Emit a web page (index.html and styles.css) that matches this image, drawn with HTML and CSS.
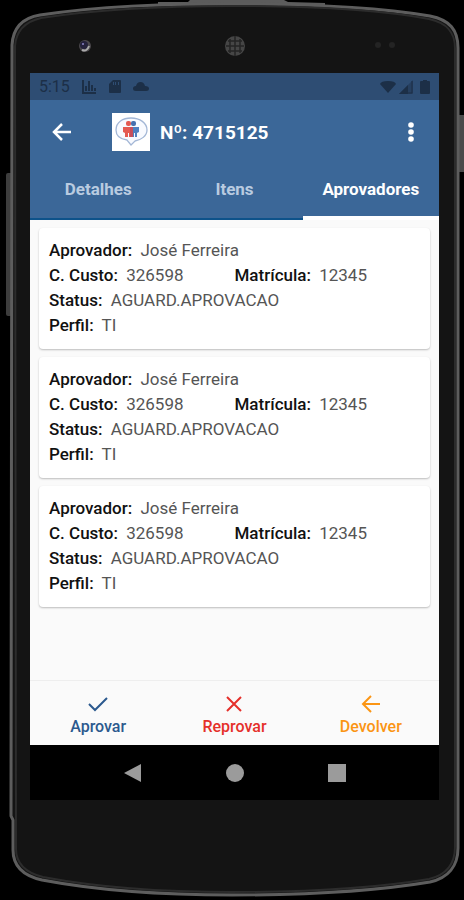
FILE: index.html
```html
<!DOCTYPE html>
<html lang="pt-BR">
<head>
  <meta charset="UTF-8">
  <meta name="viewport" content="width=device-width, initial-scale=1">
  <title>Aprovadores</title>
  <link rel="stylesheet" href="styles.css">
</head>
<body>

  <div class="phone">
    <!-- phone body -->
    <svg class="phone-frame" viewBox="0 0 464 900" preserveAspectRatio="none" aria-hidden="true">
      <rect x="6" y="173" width="8" height="143" rx="2" fill="#3d3d3d"/>
      <rect x="457" y="115" width="10" height="57" rx="2" fill="#4a4a4a"/>
      <path d="M158 2H188L190 0H284L288 2L325 3V6H158Z" fill="#5c5c5c"/>
      <path d="M12 45C13 28 22 18 40 15C100 6 160 4 232 4C310 4 380 8 430 16C450 20 458 30 458 48V848C458 866 448 878 430 882C370 892 300 895 232 895C160 895 95 890 42 880C24 876 13 866 13 850V820L11 816Z" fill="#141414" stroke="#5d5d5d" stroke-width="3"/>
      <path d="M15 46C16 31 24 22 41 18C100 9 160 6 232 6C310 6 380 10 429 19C447 23 455 32 455 48V847C455 864 446 875 429 879C370 889 300 892 232 892C160 892 96 887 43 877C27 873 16 864 16 849Z" fill="none" stroke="#2c2c2c" stroke-width="2"/>
    </svg>

    <div class="phone-top" aria-hidden="true">
      <svg viewBox="0 0 24 24"><circle cx="12" cy="12" r="6" fill="#4b484c"/><circle cx="11" cy="11" r="4" fill="#25223c"/><circle cx="10" cy="10" r="1" fill="#8d86c8"/><path d="M9 16Q14 18 16 12" stroke="#aaa" stroke-width="2" fill="none"/></svg>
      <svg viewBox="0 0 24 24"><circle cx="12" cy="12" r="10" fill="#464646"/><path d="M5 7H19M3 12H21M5 17H19M7 5V19M12 2V22M17 5V19" stroke="#252525" stroke-width="1.5"/></svg>
      <svg viewBox="0 0 24 24"><circle cx="5" cy="11" r="3" fill="#242424"/><circle cx="19" cy="11" r="3" fill="#242424"/></svg>
    </div>

    <main class="screen">
      <div class="status-bar">
        <span class="clock">5:15</span>
        <svg width="16" height="16" viewBox="0 0 16 16"><path d="M1 1H3V13H15V15H1Z"/><path d="M4 7H6V12H4ZM7 2H9V12H7ZM10 6H12V12H10ZM13 9H15V12H13Z"/></svg>
        <svg class="sd" width="12" height="16" viewBox="0 0 12 16"><path fill-rule="evenodd" d="M4 1H11Q12 1 12 2V13Q12 14 11 14H1Q0 14 0 13V5ZM4 3V6H5V3ZM6 3V6H7V3ZM9 3V6H10V3Z"/></svg>
        <svg width="16" height="16" viewBox="0 0 16 16"><path d="M3 12Q0 12 0 9.500T3 7Q4 3 7.500 3T12 7Q16 7 16 9.500T13 12Z"/></svg>
        <span class="spacer"></span>
        <svg class="wifi" width="16" height="16" viewBox="0 0 16 16"><path d="M0 5Q1 2 8 2T16 5L8 14Z"/></svg>
        <svg width="14" height="16" viewBox="0 0 14 16"><path d="M14 1V15H0Z" opacity=".45"/><path d="M9 6V15H0Z"/><path d="M13 2V14H9" fill="none" stroke="#1c2f47"/></svg>
        <svg class="battery" width="10" height="16" viewBox="0 0 10 16"><path d="M3 1H7V2H9Q10 2 10 3V14Q10 15 9 15H1Q0 15 0 14V3Q0 2 1 2H3Z"/></svg>
      </div>

      <header class="app-bar">
        <button class="icon-btn" aria-label="Voltar">
          <svg width="24" height="24" viewBox="0 0 24 24"><path d="M21 12H4M12 4L4 12L12 20" fill="none" stroke="#fff" stroke-width="2.500"/></svg>
        </button>
        <svg class="logo" viewBox="0 0 38 38" role="img" aria-label="Logo">
          <rect width="38" height="38" fill="#fff"/>
          <path d="M15 27C7 26 4 22 4 17C4 9 11 5 19 5C28 5 35 10 35 17C35 23 29 27 23 28L19 32Z" fill="#f8faff" stroke="#a3b7d6" stroke-width="1.300"/>
          <rect x="14" y="8" width="5" height="5" rx="2" fill="#e45a52"/>
          <rect x="19" y="8" width="5" height="5" rx="2" fill="#456fae"/>
          <path d="M11 14H20V24H17V20H16V24H13V20L11 19Z" fill="#e45a52"/>
          <path d="M20 14H27V19L25 20V24H23V20H22V24H20Z" fill="#4f80c0"/>
          <path d="M18 14H21V24H18Z" fill="#c64f5d"/>
        </svg>
        <h1>Nº: 4715125</h1>
        <button class="icon-btn" aria-label="Mais opções">
          <svg width="24" height="24" viewBox="0 0 24 24" fill="#fff"><circle cx="12" cy="5" r="2.800"/><circle cx="12" cy="12" r="2.800"/><circle cx="12" cy="19" r="2.800"/></svg>
        </button>
      </header>

      <nav class="tabs">
        <a href="#detalhes">Detalhes</a>
        <a href="#itens">Itens</a>
        <a href="#aprovadores" class="active" aria-current="page">Aprovadores</a>
      </nav>

      <section class="list" id="aprovadores">
        <article class="card">
          <p><b>Aprovador:</b> José Ferreira</p>
          <div class="cols">
            <p><b>C. Custo:</b> 326598</p>
            <p><b>Matrícula:</b> 12345</p>
          </div>
          <p><b>Status:</b> AGUARD.APROVACAO</p>
          <p><b>Perfil:</b> TI</p>
        </article>
        <article class="card">
          <p><b>Aprovador:</b> José Ferreira</p>
          <div class="cols">
            <p><b>C. Custo:</b> 326598</p>
            <p><b>Matrícula:</b> 12345</p>
          </div>
          <p><b>Status:</b> AGUARD.APROVACAO</p>
          <p><b>Perfil:</b> TI</p>
        </article>
        <article class="card">
          <p><b>Aprovador:</b> José Ferreira</p>
          <div class="cols">
            <p><b>C. Custo:</b> 326598</p>
            <p><b>Matrícula:</b> 12345</p>
          </div>
          <p><b>Status:</b> AGUARD.APROVACAO</p>
          <p><b>Perfil:</b> TI</p>
        </article>
      </section>

      <footer class="actions">
        <button class="approve">
          <svg width="24" height="24" viewBox="0 0 24 24"><path d="M3 12L9 18L21 6"/></svg>
          Aprovar
        </button>
        <button class="reject">
          <svg width="24" height="24" viewBox="0 0 24 24"><path d="M5 5L19 19M19 5L5 19"/></svg>
          Reprovar
        </button>
        <button class="return">
          <svg width="24" height="24" viewBox="0 0 24 24"><path d="M21 12H4M12 4L4 12L12 20"/></svg>
          Devolver
        </button>
      </footer>

      <div class="android-nav">
        <button aria-label="Voltar"><svg width="20" height="20" viewBox="0 0 20 20"><path d="M18 1V19L1 10Z"/></svg></button>
        <button aria-label="Início"><svg width="20" height="20" viewBox="0 0 20 20"><circle cx="10" cy="10" r="9"/></svg></button>
        <button aria-label="Recentes"><svg width="20" height="20" viewBox="0 0 20 20"><rect x="1" y="1" width="18" height="18"/></svg></button>
      </div>
    </main>
  </div>

</body>
</html>
```
FILE: styles.css
```css
:root {
  --blue: #3b6798;
  --blue-dark: #2e4d73;
  --line: #0d528a;
  --bg: #fafafa;
  --status: #1c2f47;
}

* {
  box-sizing: border-box;
}

body {
  margin: 0;
  background: #000;
  font-family: Roboto, "Liberation Sans", sans-serif;
}

h1, p {
  margin: 0;
}

button {
  padding: 0;
  border: none;
  background: none;
  font: inherit;
  cursor: pointer;
}

svg {
  display: block;
  flex: none;
}

.phone {
  position: relative;
  display: flex;
  flex-direction: column;
  min-height: 100vh;
  padding: 0 25px 100px 30px;
}

.phone-frame {
  position: absolute;
  inset: 0;
  width: 100%;
  height: 100%;
}

.phone-top {
  position: relative;
  display: flex;
  justify-content: space-between;
  padding: 34px 42px 15px 43px;
}

.phone-top svg {
  width: 24px;
  height: 24px;
}

.screen {
  position: relative;
  flex: 1;
  display: flex;
  flex-direction: column;
  background: var(--bg);
}

/* Top bars */
.status-bar {
  display: flex;
  align-items: center;
  height: 27px;
  padding: 0 9px;
  background: var(--blue-dark);
  color: var(--status);
  fill: var(--status);
}

.clock {
  width: 42px;
  font-size: 16px;
}

.sd {
  margin: 0 12px;
}

.spacer {
  flex: 1;
}

.wifi {
  margin-right: 3px;
}

.battery {
  margin-left: 7px;
}

.app-bar {
  display: flex;
  align-items: center;
  height: 64px;
  padding: 0 16px 0 20px;
  background: var(--blue);
  color: #fff;
}

.logo {
  width: 38px;
  height: 38px;
  margin: 0 10px 0 38px;
}

.app-bar h1 {
  flex: 1;
  font-size: 19px;
  font-weight: 700;
}

.tabs {
  display: grid;
  grid-template-columns: repeat(3, 1fr);
  height: 56px;
  background: var(--blue);
}

.tabs a {
  padding-top: 13px;
  border-bottom: 2px solid var(--line);
  color: #b9cbe0;
  font-size: 17px;
  line-height: 24px;
  font-weight: 700;
  text-align: center;
  text-decoration: none;
}

.tabs .active {
  border-bottom: 4px solid #fff;
  color: #fff;
}

/* Cards */
.list {
  flex: 1;
  display: flex;
  flex-direction: column;
  gap: 8px;
  padding: 8px 9px;
}

.card {
  padding: 10px 10px 11px;
  border-radius: 4px;
  background: #fff;
  box-shadow: 0 1px 2px rgba(0, 0, 0, 0.25);
  color: #555;
  font-size: 17px;
  line-height: 25px;
}

.card b {
  margin-right: 4px;
  color: #111;
  font-weight: 500;
}

.cols {
  display: grid;
  grid-template-columns: 1fr 1fr;
}

/* Bottom bars */
.actions {
  display: grid;
  grid-template-columns: repeat(3, 1fr);
  height: 65px;
  border-top: 1px solid #eee;
}

.actions button {
  display: flex;
  flex-direction: column;
  align-items: center;
  padding-top: 11px;
  font-size: 16px;
  font-weight: 500;
  line-height: 22px;
}

.actions path {
  fill: none;
  stroke: currentColor;
  stroke-width: 2;
}

.approve {
  color: #2b598e;
}

.reject {
  color: #e5302b;
}

.return {
  color: #fb9514;
}

.android-nav {
  display: flex;
  justify-content: center;
  gap: 82px;
  height: 55px;
  background: #000;
  fill: #9b9b9b;
}
```
